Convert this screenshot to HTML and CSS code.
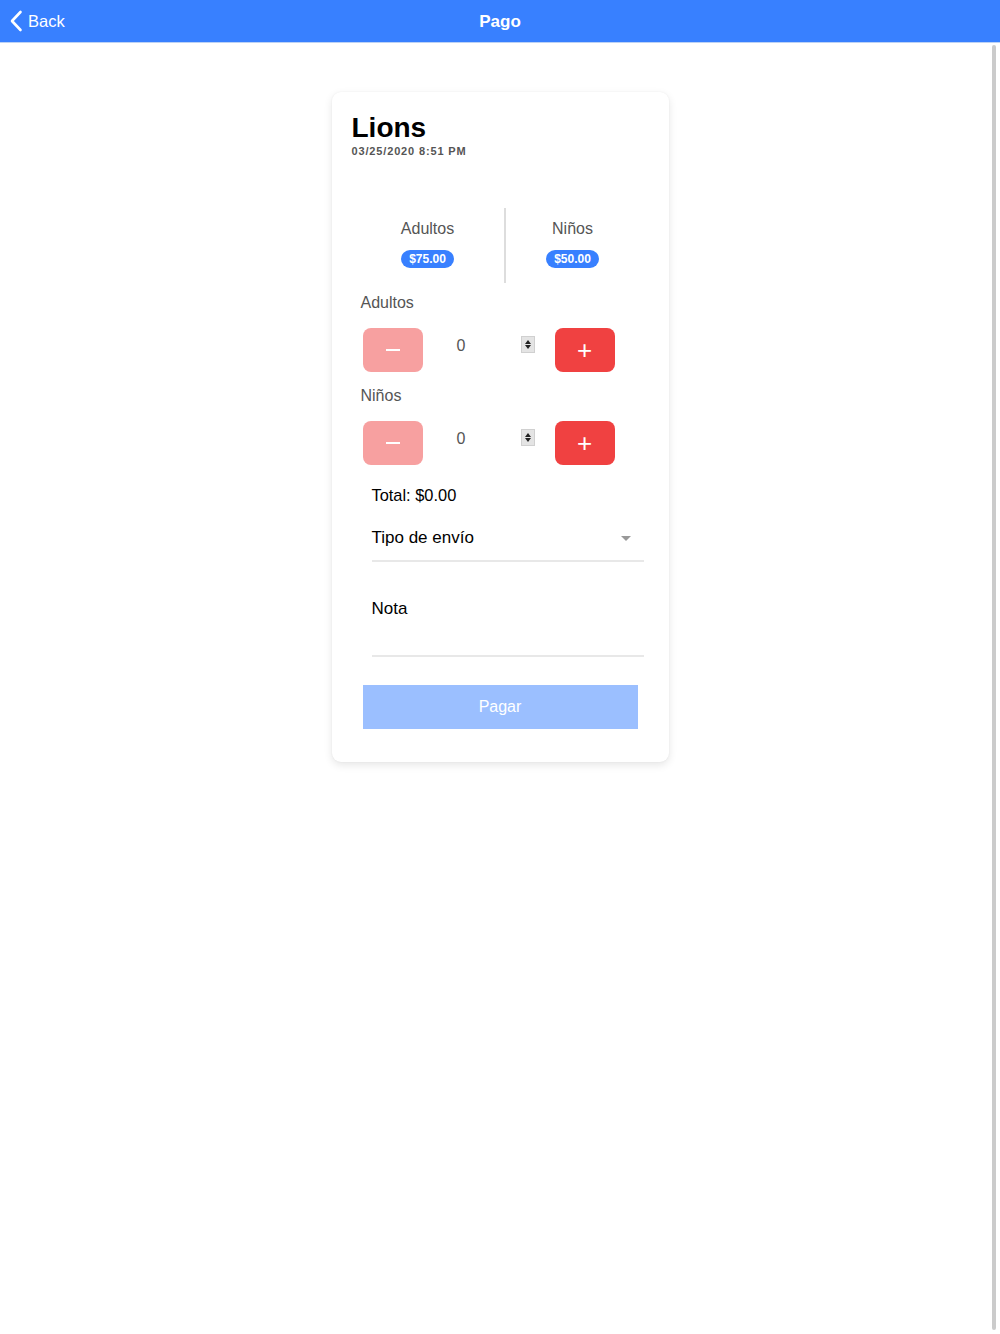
FILE: index.html
```html
<!DOCTYPE html>
<html lang="es">
<head>
  <meta charset="UTF-8">
  <meta name="viewport" content="width=device-width, initial-scale=1">
  <title>Pago</title>
  <link rel="stylesheet" href="styles.css">
</head>
<body>

  <!-- Barra superior -->
  <header class="toolbar">
    <a class="back-btn">
      <svg width="14" height="22" viewBox="0 0 14 22"><path d="M11.5 2 L3 11 L11.5 20" fill="none" stroke="white" stroke-width="2.6" stroke-linecap="round" stroke-linejoin="round"/></svg>
      <span>Back</span>
    </a>
    <div class="toolbar-title">Pago</div>
    <div></div>
  </header>

  <main class="content">
    <div class="card">
      <h1 class="event-title">Lions</h1>
      <div class="event-date">03/25/2020 8:51 PM</div>

      <!-- Precios -->
      <div class="prices">
        <div class="price-col">
          <div class="price-label">Adultos</div>
          <span class="badge">$75.00</span>
        </div>
        <div class="price-col right">
          <div class="price-label">Niños</div>
          <span class="badge">$50.00</span>
        </div>
      </div>

      <!-- Cantidades -->
      <div class="qty-label">Adultos</div>
      <div class="qty-row">
        <button class="qty-btn disabled"><span class="minus"></span></button>
        <div class="qty-input">
          <span class="qty-value">0</span>
          <span class="spinner"><i class="up"></i><i class="down"></i></span>
        </div>
        <button class="qty-btn">+</button>
      </div>

      <div class="qty-label">Niños</div>
      <div class="qty-row">
        <button class="qty-btn disabled"><span class="minus"></span></button>
        <div class="qty-input">
          <span class="qty-value">0</span>
          <span class="spinner"><i class="up"></i><i class="down"></i></span>
        </div>
        <button class="qty-btn">+</button>
      </div>

      <div class="total">Total: $0.00</div>

      <div class="field select-field">
        <span>Tipo de envío</span>
        <i class="select-arrow"></i>
      </div>

      <div class="field note-field">
        <span>Nota</span>
      </div>

      <button class="pay-btn">Pagar</button>
    </div>
  </main>

  <div class="scroll-bar"></div>

</body>
</html>
```

FILE: styles.css
```css
* { margin: 0; padding: 0; box-sizing: border-box; }

body {
  font-family: 'Liberation Sans', Arial, sans-serif;
  background-color: #fff;
  color: #000;
  height: 1334px;
  overflow: hidden;
}

.toolbar {
  display: grid;
  grid-template-columns: 1fr auto 1fr;
  align-items: center;
  height: 43px;
  background-color: #3880ff;
  border-bottom: 1px solid #bcd2f5;
  color: white;
}

.back-btn {
  display: flex;
  align-items: center;
  gap: 5px;
  padding-left: 9px;
  font-size: 16.5px;
}

.back-btn svg {
  display: block;
}

.toolbar-title {
  font-size: 17px;
  font-weight: bold;
  padding-top: 1px;
}

.content {
  padding-top: 49px;
}

.card {
  width: 337px;
  margin: 0 auto;
  background: white;
  border-radius: 9px;
  box-shadow: 0 3px 8px rgba(0, 0, 0, 0.1), 0 0 2px rgba(0, 0, 0, 0.06);
  padding: 20px 20px 33px 20px;
}

.event-title {
  font-size: 28px;
  font-weight: bold;
  line-height: 32px;
}

.event-date {
  font-size: 11px;
  font-weight: bold;
  color: #555;
  letter-spacing: 0.85px;
  line-height: 14px;
}

.prices {
  display: grid;
  grid-template-columns: 152px 136px;
  margin-top: 50px;
}

.price-col {
  display: flex;
  flex-direction: column;
  align-items: center;
  padding: 11px 0 15px 0;
}

.price-col.right {
  border-left: 2px solid #ddd;
}

.price-label {
  font-size: 16px;
  line-height: 20px;
  color: #555;
}

.badge {
  margin-top: 11px;
  background-color: #3880ff;
  color: white;
  font-size: 12px;
  font-weight: bold;
  line-height: 18px;
  padding: 0 8px;
  border-radius: 9px;
}

.qty-label {
  font-size: 16px;
  line-height: 20px;
  color: #555;
  margin: 10px 0 0 9px;
}

.qty-label + .qty-row {
  margin-top: 15px;
}

.qty-row + .qty-label {
  margin-top: 14px;
}

.qty-row {
  display: flex;
  margin-left: 11px;
}

.qty-btn {
  display: flex;
  align-items: center;
  justify-content: center;
  width: 60px;
  height: 44px;
  border: none;
  border-radius: 8px;
  background-color: #f04141;
  color: white;
  font-family: 'Liberation Sans', Arial, sans-serif;
  font-size: 26px;
  line-height: 44px;
}

.qty-btn.disabled {
  background-color: #f7a0a0;
}

.minus {
  display: block;
  width: 14px;
  height: 2px;
  background: white;
}

.qty-input {
  width: 132px;
  display: flex;
  align-items: flex-start;
  padding: 8px 20px 0 34px;
}

.qty-value {
  font-size: 16px;
  line-height: 20px;
  color: #555;
}

.spinner {
  margin-left: auto;
  width: 14px;
  height: 17px;
  background: #e4e4e4;
  border: 1px solid #d0d0d0;
  display: flex;
  flex-direction: column;
  align-items: center;
  justify-content: space-around;
  padding: 2px 0;
}

.spinner i {
  width: 0;
  height: 0;
  border-left: 3px solid transparent;
  border-right: 3px solid transparent;
}

.spinner .up {
  border-bottom: 4px solid #222;
}

.spinner .down {
  border-top: 4px solid #222;
}

.total {
  font-size: 16.4px;
  line-height: 20px;
  margin: 20px 0 0 20px;
}

.field {
  margin-left: 20px;
  margin-right: 5px;
  border-bottom: 2px solid #e8e8e8;
  font-size: 17px;
  line-height: 20px;
}

.select-field {
  display: flex;
  align-items: center;
  margin-top: 23px;
  padding-bottom: 12px;
}

.select-arrow {
  margin-left: auto;
  margin-right: 13px;
  width: 0;
  height: 0;
  border-left: 5px solid transparent;
  border-right: 5px solid transparent;
  border-top: 5px solid #999;
}

.note-field {
  margin-top: 37px;
  padding-bottom: 36px;
}

.pay-btn {
  display: block;
  width: 275px;
  height: 44px;
  margin: 28px 0 0 11px;
  border: none;
  background-color: #9bbfff;
  color: white;
  font-family: 'Liberation Sans', Arial, sans-serif;
  font-size: 16px;
}

.scroll-bar {
  position: fixed;
  top: 45px;
  right: 4px;
  width: 4px;
  height: 1285px;
  border-radius: 2px;
  background-color: #cbcbcb;
}
```
